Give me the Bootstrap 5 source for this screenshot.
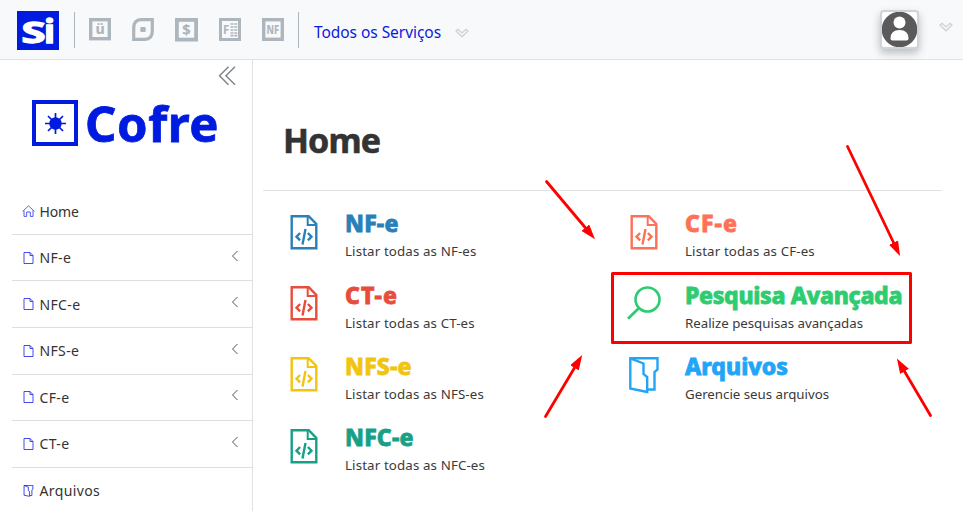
<!DOCTYPE html>
<html lang="pt-BR" data-bs-theme="light">
<head>
<meta charset="utf-8">
<meta name="viewport" content="width=device-width, initial-scale=1">
<title>Cofre - Home</title>
<link href="https://cdn.jsdelivr.net/npm/bootstrap@5.3.0/dist/css/bootstrap.min.css" rel="stylesheet">
<style>
  body { font-family: "Noto Sans", sans-serif; color: #333; width: 963px; height: 511px; overflow: hidden; background: #fff; }
  svg { display: block; flex: none; }
  .topbar { height: 60px; background: #f8f9fb; border-bottom: 1px solid #dee2e6; padding-left: 17px; }
  .brand-logo { margin: 11px 15px 0 0; overflow: visible; }
  .sep { width: 1px; height: 36px; background: #adb5bd; margin-top: 12px; }
  .apps { gap: 21px; padding: 18px 14px 0 14px; color: #adb5bd; }
  .services { margin: 20px 0 0 15px; line-height: 24px; font-size: 15.5px; letter-spacing: -.05px; color: #0a1be0; }
  .services-caret { margin: 28px 0 0 14px; }
  .user-caret { margin: 22px 10px 0 0; }
  .avatar { margin: 10px 20px 0 auto; width: 39px; height: 39px; border: 2px solid #ced4da; border-radius: 4px; background: #fff; box-shadow: 0 4px 9px rgba(0,0,0,.25); }
  .sidebar { width: 253px; border-right: 1px solid #dee2e6; height: 451px; }
  .collapse-btn { height: 40px; padding: 6px 16px 0 0; }
  .product { padding-left: 32px; height: 88.4px; color: #001be0; }
  .product-name { font-size: 49px; line-height: 46px; font-weight: 700; margin-left: 7px; letter-spacing: .6px; -webkit-text-stroke: .8px #001be0; }
  .menu { margin-left: 12px; }
  .menu-row { height: 46.55px; border-bottom: 1px solid #dedede; font-size: 14px; letter-spacing: .4px; padding: 0 13px 0 10px; }
  .menu-row span { margin-left: 4.4px; }
  .menu-row .home-label { letter-spacing: -.1px; }
  .menu-row .chev { margin: -4px 0 0 auto; }
  .content { padding: 0 21px 0 10px; }
  .page-title { height: 131px; border-bottom: 1px solid #e3e3e3; padding: 57px 0 0 20px; font-size: 34px; line-height: 46px; font-weight: 700; letter-spacing: -.9px; -webkit-text-stroke: .6px #333; margin: 0; }
  .tile { height: 71.3px; }
  .tile-icon { width: 61px; padding-top: 3.6px; }
  .tile h2 { font-size: 23px; line-height: 24px; font-weight: 800; margin: 0 0 6px; white-space: nowrap; letter-spacing: .2px; -webkit-text-stroke: .8px currentColor; }
  .tile h2.loose { letter-spacing: 1.1px; }
  .tile h2.tight { letter-spacing: -.32px; }
  .tile h2.plain { letter-spacing: 0; }
  .tile p { font-size: 13.3px; line-height: 20px; margin: 0; white-space: nowrap; color: #3a3a3a; letter-spacing: .13px; }
  .tile p.close-set { letter-spacing: -.02px; }
  .tiles { padding: 20.3px 0 0 21px; }
  .tiles .second { padding-left: 11px; }
  .overlay { position: absolute; left: 0; top: 0; pointer-events: none; }
</style>
<script src="https://cdn.jsdelivr.net/npm/bootstrap@5.3.0/dist/js/bootstrap.bundle.min.js"></script>
</head>
<body class="position-relative">
<svg width="0" height="0" class="position-absolute">
  <defs>
    <symbol id="xml" viewBox="0 0 27 35"><path d="M1.2 1.2H18.2L25.8 9V33.2H1.2Z" fill="none" stroke="currentColor" stroke-width="2.4"/><path d="M17.2 2V10H25" fill="none" stroke="currentColor" stroke-width="2"/><path d="M9.6 18L6 21.7L9.6 25.4M17.4 18L21 21.7L17.4 25.4M15 14L12 29.5" fill="none" stroke="currentColor" stroke-width="2.4"/></symbol>
    <symbol id="folder" viewBox="0 0 30 37"><path d="M1.3 1.3H28.5V12.5L25.5 15V32.5H19" fill="none" stroke="currentColor" stroke-width="2.4"/><path d="M1.3 1.3L14.5 6.5V17L18.2 20V35L1.3 31.5Z" fill="none" stroke="currentColor" stroke-width="2.4"/></symbol>
    <symbol id="page" viewBox="0 0 10 12"><path d="M.5.5H6.5L9.5 3.5V11.5H.5Z" fill="none" stroke="#3038e8" stroke-width=".9"/><path d="M6.5.5V3.5H9.5" fill="none" stroke="#3038e8" stroke-width=".9"/></symbol>
    <symbol id="left" viewBox="0 0 8 12"><path d="M6.5 1L1.5 6L6.5 11" fill="none" stroke="#555" stroke-width="1"/></symbol>
    <symbol id="down" viewBox="0 0 14 10"><path d="M1 3L3 1.2L7 5L11 1.2L13 3L7 8.8Z" fill="none" stroke="#ccd1d7" stroke-width="1.2"/></symbol>
    <marker id="head" viewBox="0 0 15 10" refX="1" refY="5" markerWidth="15" markerHeight="10" markerUnits="userSpaceOnUse" orient="auto"><path d="M0 0L15 5L0 10Z" fill="#f00"/></marker>
  </defs>
</svg>

<header class="topbar d-flex align-items-start">
  <svg class="brand-logo" width="42" height="39" viewBox="0 0 42 39"><rect width="42" height="39" fill="#001be0"/><g fill="#fff" stroke="#fff" stroke-width="1.3" font-family="Noto Sans" font-weight="700"><text x="4.5" y="32" font-size="28" textLength="24" lengthAdjust="spacingAndGlyphs">S</text><text x="27" y="32" font-size="32" textLength="11" lengthAdjust="spacingAndGlyphs">i</text></g></svg>
  <div class="sep"></div>
  <nav class="apps d-flex">
    <svg width="22" height="23" viewBox="0 0 22 23"><rect x="1.7" y="1.7" width="18.6" height="19" fill="none" stroke="currentColor" stroke-width="3.4"/><text x="11" y="16.3" font-family="Noto Sans" font-weight="800" font-size="14" text-anchor="middle" fill="currentColor">ü</text></svg>
    <svg width="22" height="23" viewBox="0 0 22 23"><path d="M9 1.7H20.3V13Q20.3 21.3 13 21.3H1.7V10Q1.7 1.7 9 1.7Z" fill="none" stroke="currentColor" stroke-width="3.2"/><rect x="8.3" y="9" width="5.4" height="5" rx="1" fill="currentColor"/></svg>
    <svg width="23" height="24" viewBox="0 0 23 24"><rect x="1.9" y="1.9" width="19.2" height="19.7" fill="none" stroke="currentColor" stroke-width="3.8"/><text x="11.5" y="16.8" font-family="Noto Sans" font-weight="800" font-size="14.5" text-anchor="middle" fill="currentColor">$</text></svg>
    <svg width="22" height="23" viewBox="0 0 22 23"><rect x="1.5" y="1.5" width="19" height="20" fill="none" stroke="currentColor" stroke-width="3"/><text x="4" y="15.7" font-family="Noto Sans" font-weight="700" font-size="11.5" fill="currentColor">F</text><path d="M11.5 6h7M11.5 9h7M11.5 12h7M11.5 15h7M11.5 17.7h7" stroke="currentColor" stroke-width="1.7" stroke-dasharray="3 .8"/></svg>
    <svg width="22" height="23" viewBox="0 0 22 23"><rect x="1.7" y="1.7" width="18.6" height="19.6" fill="none" stroke="currentColor" stroke-width="3.4"/><text x="4.6" y="15.7" font-family="Noto Sans" font-weight="800" font-size="11.5" textLength="12.5" lengthAdjust="spacingAndGlyphs" fill="currentColor">NF</text></svg>
  </nav>
  <div class="sep"></div>
  <div class="services">Todos os Serviços</div>
  <svg class="services-caret" width="14" height="10"><use href="#down"/></svg>
  <div class="avatar"><svg width="35" height="35" viewBox="0 0 35 35"><circle cx="17.5" cy="17.5" r="17.8" fill="#5a5a5a"/><circle cx="17.5" cy="10.6" r="6" fill="#fff"/><path d="M8.5 26.5Q8.5 18 17.5 18T26.5 26.5Q26.5 28.5 24.5 28.5H10.5Q8.5 28.5 8.5 26.5Z" fill="#fff"/></svg></div>
  <svg class="user-caret" width="14" height="10"><use href="#down"/></svg>
</header>

<div class="d-flex">
  <aside class="sidebar flex-shrink-0">
    <div class="collapse-btn d-flex justify-content-end"><svg width="18" height="20" viewBox="0 0 18 20"><path d="M10.5.8L1.5 9.8L10.5 18.8M17 .8L8 9.8L17 18.8" fill="none" stroke="#7f868c" stroke-width="1.5"/></svg></div>
    <div class="product d-flex">
      <svg width="46" height="46" viewBox="0 0 46 46"><rect x="2" y="2" width="42" height="42" fill="none" stroke="#001be0" stroke-width="4"/><circle cx="23.5" cy="23.5" r="6.2" fill="#001be0"/><path d="M23.5 13V34M13 23.5H34M16 16L31 31M31 16L16 31" stroke="#001be0" stroke-width="1.7"/></svg>
      <span class="product-name">Cofre</span>
    </div>
    <nav class="menu">
      <div class="menu-row d-flex align-items-center"><svg width="13" height="12" viewBox="0 0 13 12"><path d="M.6 6.5L6.5 .8L12.4 6.5M2 5.5V11.4H4.7V7H8.3V11.4H11V5.5" fill="none" stroke="#4048ea" stroke-width=".9"/></svg><span class="home-label">Home</span></div>
      <div class="menu-row d-flex align-items-center"><svg width="13" height="12"><use href="#page"/></svg><span>NF-e</span><svg class="chev" width="8" height="12"><use href="#left"/></svg></div>
      <div class="menu-row d-flex align-items-center"><svg width="13" height="12"><use href="#page"/></svg><span>NFC-e</span><svg class="chev" width="8" height="12"><use href="#left"/></svg></div>
      <div class="menu-row d-flex align-items-center"><svg width="13" height="12"><use href="#page"/></svg><span>NFS-e</span><svg class="chev" width="8" height="12"><use href="#left"/></svg></div>
      <div class="menu-row d-flex align-items-center"><svg width="13" height="12"><use href="#page"/></svg><span>CF-e</span><svg class="chev" width="8" height="12"><use href="#left"/></svg></div>
      <div class="menu-row d-flex align-items-center"><svg width="13" height="12"><use href="#page"/></svg><span>CT-e</span><svg class="chev" width="8" height="12"><use href="#left"/></svg></div>
      <div class="menu-row d-flex align-items-center border-0"><svg width="13" height="12" color="#1018e4"><use href="#folder"/></svg><span>Arquivos</span></div>
    </nav>
  </aside>
  <main class="content flex-grow-1">
    <h1 class="page-title">Home</h1>
    <div class="tiles row g-0">
      <div class="col-6">
        <div class="tile d-flex" style="color:#2980b9"><div class="tile-icon flex-shrink-0"><svg width="40" height="35"><use href="#xml"/></svg></div><div><h2>NF-e</h2><p>Listar todas as NF-es</p></div></div>
        <div class="tile d-flex" style="color:#e74c3c"><div class="tile-icon flex-shrink-0"><svg width="40" height="35"><use href="#xml"/></svg></div><div><h2 class="loose">CT-e</h2><p>Listar todas as CT-es</p></div></div>
        <div class="tile d-flex" style="color:#f1c40f"><div class="tile-icon flex-shrink-0"><svg width="40" height="35"><use href="#xml"/></svg></div><div><h2>NFS-e</h2><p>Listar todas as NFS-es</p></div></div>
        <div class="tile d-flex" style="color:#16a085"><div class="tile-icon flex-shrink-0"><svg width="40" height="35"><use href="#xml"/></svg></div><div><h2>NFC-e</h2><p>Listar todas as NFC-es</p></div></div>
      </div>
      <div class="col-6 second">
        <div class="tile d-flex" style="color:#ff7058"><div class="tile-icon flex-shrink-0"><svg width="40" height="35"><use href="#xml"/></svg></div><div><h2 class="loose">CF-e</h2><p>Listar todas as CF-es</p></div></div>
        <div class="tile d-flex" style="color:#2ecc71"><div class="tile-icon flex-shrink-0"><svg width="40" height="36" viewBox="0 0 40 36"><circle cx="23.5" cy="13.5" r="12" fill="none" stroke="currentColor" stroke-width="2.6"/><path d="M15 22L4 32.8" fill="none" stroke="currentColor" stroke-width="2.8"/></svg></div><div><h2 class="tight">Pesquisa Avançada</h2><p class="close-set">Realize pesquisas avançadas</p></div></div>
        <div class="tile d-flex" style="color:#22a5f7"><div class="tile-icon flex-shrink-0"><svg width="40" height="37"><use href="#folder"/></svg></div><div><h2 class="plain">Arquivos</h2><p class="close-set">Gerencie seus arquivos</p></div></div>
      </div>
    </div>
  </main>
</div>

<!-- Callout box and arrows laid over the page -->
<svg class="overlay" width="963" height="511" viewBox="0 0 963 511" fill="none" stroke="#f00" stroke-width="2.8" stroke-linecap="round">
  <rect x="612.5" y="273.5" width="298" height="69" stroke-linejoin="round" stroke-width="3"/>
  <path d="M546.5 181.5L586 228.500" marker-end="url(#head)"/>
  <path d="M847.5 146.5L894 243.500" marker-end="url(#head)"/>
  <path d="M545.5 416.5L575 367" marker-end="url(#head)"/>
  <path d="M930.5 415.5L904 370.500" marker-end="url(#head)"/>
</svg>
</body>
</html>
